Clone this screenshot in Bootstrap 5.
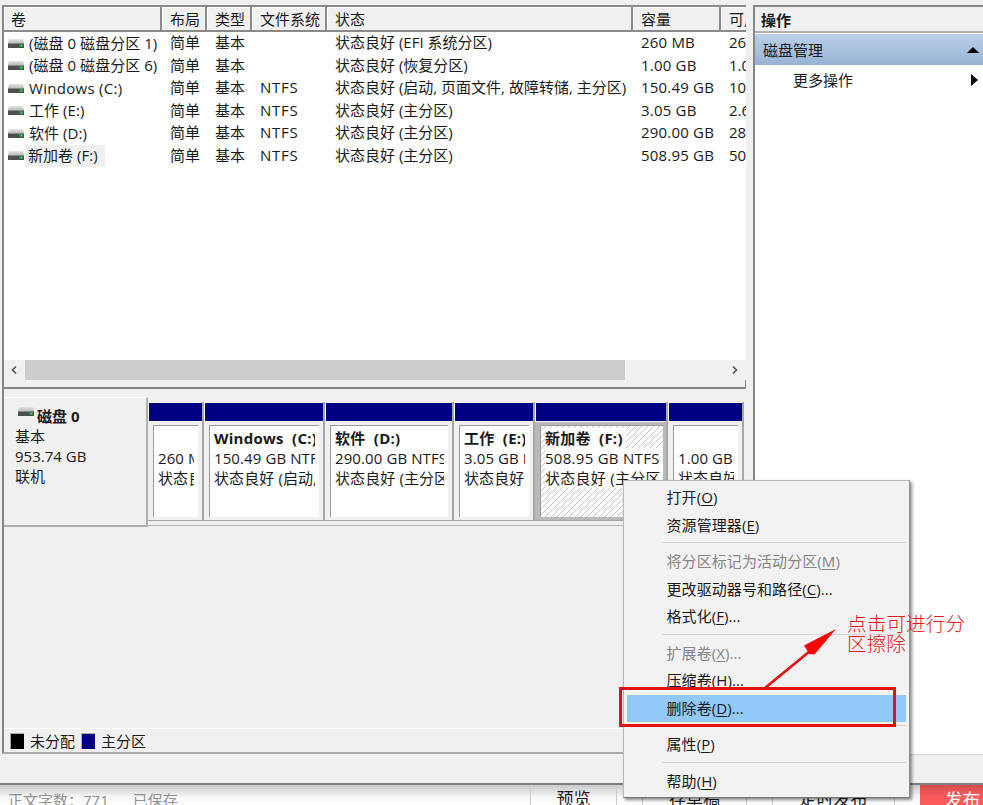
<!DOCTYPE html>
<html lang="zh-CN">
<head>
<meta charset="utf-8">
<meta name="viewport" content="width=device-width, initial-scale=1">
<title>磁盘管理</title>
<link href="https://cdn.jsdelivr.net/npm/bootstrap@5.3.0/dist/css/bootstrap.min.css" rel="stylesheet">
<style>
  body { font: 15px/20px "Open Sans", "Noto Sans CJK SC", sans-serif; color: #1a1a1a; width: 983px; height: 805px; background: #fff; }
  .desk { width: 983px; height: 805px; }
  .app-window { height: 785px; background: #f0f0f0; border-bottom: 2px solid #7d7d7d; padding-top: 5px; }
  .left-pane { width: 744px; height: 749px; margin-left: 2px; border-left: 2px solid #868686; border-bottom: 2px solid #a8a8a8; border-top: 2px solid #8a8a8a; }
  .vol-area { height: 353px; background: #fff; }
  .vol-row { display: grid; grid-template-columns: 158px 45px 45px 75px 306px 88px 25px; height: 22.5px; line-height: 21.5px; white-space: nowrap; }
  .vol-row > div { padding-left: 8px; overflow: hidden; }
  .vol-row > div:first-child { padding-left: 4px; }
  .vol-row > div:nth-child(4) { letter-spacing: .7px; }
  .vol-row > div:nth-child(6) { letter-spacing: .2px; }
  .vol-head { height: 25px; line-height: 24px; background: #f0f0f0; border-bottom: 2px solid #8a8a8a; }
  .vol-head > div { border-right: 2px solid #8a8a8a; box-shadow: inset 1px 1px 0 #fff; }
  .vol-row.vol-head > div { letter-spacing: 0; }
  .vol-row.vol-head > div:first-child { padding-left: 7px; }
  .vol-head > div:last-child { border-right: 0; }
  .drive { width: 16px; height: 9px; margin-right: 1px; flex: none; }
  .vol-name { padding: 0 3px 0 4px; letter-spacing: .05px; }
  .vol-name.wide-name { letter-spacing: .3px; }
  .vol-name.picked { background: #f0f0f0; padding: 0 7px 0 3px; height: 22px; }
  .cn { letter-spacing: 0; }
  .hscroll { height: 20px; background: #f0f0f0; }
  .hscroll .thumb { width: 600px; height: 20px; background: #cdcdcd; }
  .hscroll .arrow-box { width: 21px; }
  .hscroll .arrow-end { margin-right: 2px; }
  .split { height: 9px; border-bottom: 2px solid #868686; border-right: 1px solid #868686; }
  .disk-area { height: 130px; margin-top: 8px; }
  .disk-info { width: 144px; height: 130px; border-right: 2px solid #b0b0b0; border-bottom: 2px solid #b0b0b0; border-top: 1px solid #fff; padding: 8px 0 0 11px; }
  .disk-title .drive { margin: 1px 2px 0 3px; }
  .disk-title b { padding-left: 1px; }
  .part-track { width: 598px; height: 129px; border-bottom: 1px solid #b4b4b4; padding-top: 5px; }
  .part { height: 119px; border-right: 2px solid #a6a6a6; border-bottom: 1px solid #a6a6a6; flex: none; }
  .part-bar { height: 20px; background: #000082; border: 1px solid #f8f8f8; border-right: 0; }
  .part-body { margin: 3px 4px 3px 5px; height: 92px; background: #fff; border-left: 1px solid #999; border-top: 1px solid #999; padding: 2px 4px 0 4px; overflow: hidden; white-space: nowrap; }
  .part-clip { overflow: hidden; height: 64px; letter-spacing: .1px; }
  .part-clip > div { height: 20px; }
  .part-clip b { letter-spacing: .25px; }
  .p1 { width: 56px; } .p2 { width: 121px; } .p3 { width: 129px; } .p4 { width: 81px; } .p5 { width: 133px; } .p6 { width: 76px; }
  .part.chosen { background: linear-gradient(#b9b9b9, #b9b9b9) 0 20px no-repeat; }
  .part.chosen .part-body { margin-right: 3px; border-color: #999; padding-right: 0; background: repeating-linear-gradient(135deg, #fff 0 3.2px, #c4c4c4 3.2px 4.24px); }
  .part.chosen .part-clip { letter-spacing: .28px; }
  .part.chosen .part-clip span { background: #fff; padding-right: 3px; display: inline-block; height: 20px; }
  .legend { height: 24px; border-top: 1px solid #fff; padding-left: 6px; }
  .swatch { width: 14px; height: 16px; border: 1px solid #aaa; border-right: 0; border-bottom: 0; }
  .swatch-gap { margin-left: 6px; }
  .primary-part { background: #000082; }
  .right-pane { width: 230px; height: 750px; background: #fff; border-top: 2px solid #868686; border-left: 2px solid #868686; border-bottom: 1px solid #ddd; }
  .act-title { height: 26px; background: #f0f0f0; border-bottom: 2px solid #b0b0b0; padding-left: 6px; line-height: 26px; }
  .act-group { height: 32px; background: linear-gradient(#b9d0ea, #98b3d3); padding: 0 4px 0 8px; border-top: 1px solid #fff; }
  .act-more { padding: 5px 5px 0 38px; }
  .web-strip { height: 20px; background: linear-gradient(#c9c9c9, #f6f6f6 60%, #fff); overflow: hidden; }
  .web-strip .cellbox { height: 30px; border-left: 1px solid #ccc; border-right: 1px solid #ccc; padding-top: 4px; text-align: center; flex: none; font-size: 17px; }
  .muted-text { color: #929292; padding-top: 5px; }
  .publish { width: 63px; height: 20px; background: linear-gradient(#d44e50, #fb5b5d 60%); color: #fff; font-size: 17.5px; padding: 4px 0 0 25px; white-space: nowrap; }
  .ctx-menu { left: 623px; top: 480px; width: 287px; height: 318px; background: #f2f2f2; border: 1px solid #b8b8b8; border-right: 1px solid #8d8d8d; border-bottom: 1px solid #777; box-shadow: 2px 2px 3px rgba(0,0,0,.45); padding: 3px; }
  .ctx-item { height: 27.5px; line-height: 26.5px; padding-left: 39.5px; letter-spacing: .08px; }
  .ctx-item.off { color: #858585; }
  .ctx-item.hot { background: #91c9f7; }
  .ctx-sep { height: 9px; margin-left: 35px; padding-top: 3px; }
  .ctx-sep::before { content: ""; display: block; height: 1px; background: #d7d7d7; }
  .ctx-item u { text-underline-offset: 2px; text-decoration-thickness: 1px; }
  .note-box { left: 619px; top: 687px; width: 277px; height: 40px; border: 3px solid #e3120f; }
  .note-arrow { left: 760px; top: 625px; }
  .note-text { left: 847px; top: 613px; width: 122px; font: 300 19.7px/20px "Noto Sans CJK SC", sans-serif; color: #e21a22; }
</style>
<script src="https://cdn.jsdelivr.net/npm/bootstrap@5.3.0/dist/js/bootstrap.bundle.min.js"></script>
</head>
<body class="overflow-hidden">
<svg width="0" height="0" class="position-absolute">
  <defs>
    <linearGradient id="lid" x1="0" y1="0" x2="0" y2="1"><stop offset="0" stop-color="#e4e6e5"/><stop offset="1" stop-color="#b9bdbc"/></linearGradient>
    <symbol id="drive" viewBox="0 0 16 9">
      <path d="M1 0H15L16 4H0Z" fill="url(#lid)"/>
      <rect y="4" width="16" height="5" fill="#4b504e"/>
      <rect y="4" width="16" height="1" fill="#858a88"/>
      <rect x="11" y="5" width="4" height="3" fill="#2f8f4c"/>
      <rect x="13" y="6" width="1" height="1" fill="#7de08e"/>
    </symbol>
  </defs>
</svg>
<div class="desk position-relative overflow-hidden">
  <div class="app-window d-flex align-items-start">
    <main class="left-pane d-flex flex-column flex-shrink-0">
      <section class="vol-area">
        <div class="vol-row vol-head">
          <div>卷</div><div>布局</div><div>类型</div><div>文件系统</div><div>状态</div><div>容量</div><div>可用</div>
        </div>
        <div class="vol-row"><div class="d-flex align-items-center"><svg class="drive"><use href="#drive"/></svg><span class="vol-name">(磁盘 0 磁盘分区 1)</span></div><div>简单</div><div>基本</div><div></div><div class="cn">状态良好 (EFI 系统分区)</div><div>260 MB</div><div>26</div></div>
        <div class="vol-row"><div class="d-flex align-items-center"><svg class="drive"><use href="#drive"/></svg><span class="vol-name">(磁盘 0 磁盘分区 6)</span></div><div>简单</div><div>基本</div><div></div><div class="cn">状态良好 (恢复分区)</div><div>1.00 GB</div><div>1.0</div></div>
        <div class="vol-row"><div class="d-flex align-items-center"><svg class="drive"><use href="#drive"/></svg><span class="vol-name wide-name">Windows (C:)</span></div><div>简单</div><div>基本</div><div>NTFS</div><div class="cn">状态良好 (启动, 页面文件, 故障转储, 主分区)</div><div>150.49 GB</div><div>10</div></div>
        <div class="vol-row"><div class="d-flex align-items-center"><svg class="drive"><use href="#drive"/></svg><span class="vol-name">工作 (E:)</span></div><div>简单</div><div>基本</div><div>NTFS</div><div class="cn">状态良好 (主分区)</div><div>3.05 GB</div><div>2.6</div></div>
        <div class="vol-row"><div class="d-flex align-items-center"><svg class="drive"><use href="#drive"/></svg><span class="vol-name">软件 (D:)</span></div><div>简单</div><div>基本</div><div>NTFS</div><div class="cn">状态良好 (主分区)</div><div>290.00 GB</div><div>28</div></div>
        <div class="vol-row"><div class="d-flex align-items-center"><svg class="drive"><use href="#drive"/></svg><span class="vol-name picked">新加卷 (F:)</span></div><div>简单</div><div>基本</div><div>NTFS</div><div class="cn">状态良好 (主分区)</div><div>508.95 GB</div><div>50</div></div>
      </section>
      <div class="hscroll d-flex">
        <div class="arrow-box d-flex align-items-center justify-content-center"><svg width="8" height="10"><path d="M5 1.5 1.5 5 5 8.5" fill="none" stroke="#555" stroke-width="1.7"/></svg></div>
        <div class="thumb"></div>
        <div class="arrow-box arrow-end ms-auto d-flex align-items-center justify-content-center"><svg width="8" height="10"><path d="M3 1.5 6.5 5 3 8.5" fill="none" stroke="#555" stroke-width="1.7"/></svg></div>
      </div>
      <div class="split"></div>
      <section class="disk-area d-flex">
        <div class="disk-info flex-shrink-0">
          <div class="disk-title d-flex"><svg class="drive"><use href="#drive"/></svg><b>磁盘 0</b></div>
          <div>基本</div><div>953.74 GB</div><div>联机</div>
        </div>
        <div class="part-track d-flex">
          <div class="part p1"><div class="part-bar"></div><div class="part-body"><div class="part-clip"><div></div><div>260 M</div><div>状态良</div></div></div></div>
          <div class="part p2"><div class="part-bar"></div><div class="part-body"><div class="part-clip"><div><b>Windows&nbsp; (C:)</b></div><div>150.49 GB NTF</div><div>状态良好 (启动,</div></div></div></div>
          <div class="part p3"><div class="part-bar"></div><div class="part-body"><div class="part-clip"><div><b>软件&nbsp; (D:)</b></div><div>290.00 GB NTFS</div><div>状态良好 (主分区</div></div></div></div>
          <div class="part p4"><div class="part-bar"></div><div class="part-body"><div class="part-clip"><div><b>工作&nbsp; (E:)</b></div><div>3.05 GB N</div><div>状态良好</div></div></div></div>
          <div class="part p5 chosen"><div class="part-bar"></div><div class="part-body"><div class="part-clip"><div><span><b>新加卷&nbsp; (F:)</b></span></div><div><span>508.95 GB NTFS</span></div><div><span>状态良好 (主分区</span></div></div></div></div>
          <div class="part p6"><div class="part-bar"></div><div class="part-body"><div class="part-clip"><div></div><div>1.00 GB</div><div>状态良好</div></div></div></div>
        </div>
      </section>
      <div class="legend mt-auto d-flex align-items-center">
        <span class="swatch bg-black"></span><span class="swatch-gap">未分配</span>
        <span class="swatch swatch-gap primary-part"></span><span class="swatch-gap">主分区</span>
      </div>
    </main>
    <aside class="right-pane ms-auto">
      <div class="act-title fw-bold">操作</div>
      <div class="act-group d-flex align-items-center justify-content-between"><span>磁盘管理</span><svg width="12" height="6"><path d="M0 6 6 0 12 6Z"/></svg></div>
      <div class="act-more d-flex align-items-center justify-content-between"><span>更多操作</span><svg width="7" height="12"><path d="M0 0 7 6 0 12Z"/></svg></div>
    </aside>
  </div>
  <footer class="web-strip d-flex">
    <div class="muted-text ps-2 flex-grow-1 text-nowrap">正文字数：771<span class="ms-4">已保存</span></div>
    <div class="cellbox" style="width:87px">预览</div>
    <div class="cellbox" style="width:105px;margin-left:25px">存草稿</div>
    <div class="cellbox" style="width:123px;margin-left:25px">定时发布</div>
    <div class="publish" style="margin-left:25px">发布</div>
  </footer>

  <div class="ctx-menu position-absolute">
    <div class="ctx-item">打开(<u>O</u>)</div>
    <div class="ctx-item">资源管理器(<u>E</u>)</div>
    <div class="ctx-sep"></div>
    <div class="ctx-item off">将分区标记为活动分区(<u>M</u>)</div>
    <div class="ctx-item">更改驱动器号和路径(<u>C</u>)...</div>
    <div class="ctx-item">格式化(<u>F</u>)...</div>
    <div class="ctx-sep"></div>
    <div class="ctx-item off">扩展卷(<u>X</u>)...</div>
    <div class="ctx-item">压缩卷(<u>H</u>)...</div>
    <div class="ctx-item hot">删除卷(<u>D</u>)...</div>
    <div class="ctx-sep"></div>
    <div class="ctx-item">属性(<u>P</u>)</div>
    <div class="ctx-sep"></div>
    <div class="ctx-item">帮助(<u>H</u>)</div>
  </div>
  <div class="note-box position-absolute"></div>
  <svg class="note-arrow position-absolute" width="80" height="66"><path d="M5 63 50 26" stroke="#e3120f" stroke-width="2.6"/><path d="M76 4 44 20.5 47 25 49 29 54.5 29.5Z" fill="#f00"/></svg>
  <div class="note-text position-absolute">点击可进行分区擦除</div>
</div>
</body>
</html>
